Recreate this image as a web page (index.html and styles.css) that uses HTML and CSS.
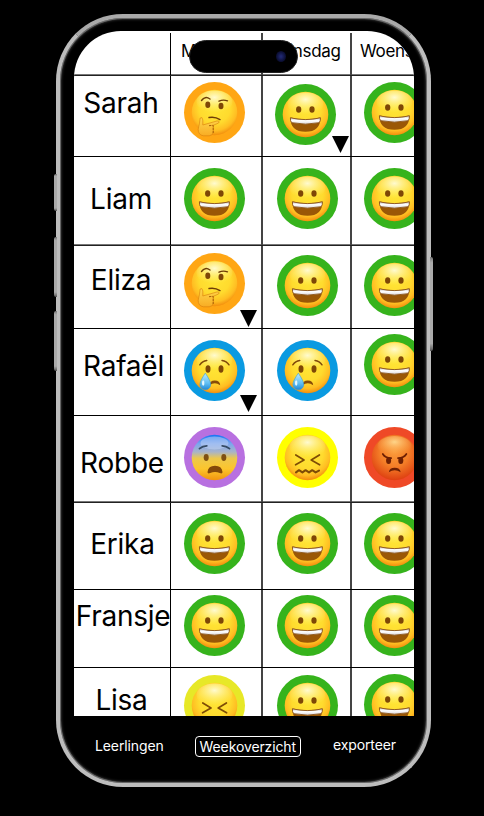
FILE: index.html
```html
<!DOCTYPE html>
<html lang="nl">
<head>
<meta charset="utf-8">
<title>Weekoverzicht</title>
<link rel="stylesheet" href="styles.css">
</head>
<body>
<svg class="defs" width="0" height="0" aria-hidden="true">
  <defs>
    <radialGradient id="skin" cx=".5" cy=".4" r=".62"><stop offset="0" stop-color="#ffe636"/><stop offset=".55" stop-color="#ffdb2e"/><stop offset=".8" stop-color="#ffbd22"/><stop offset="1" stop-color="#f08408"/></radialGradient>
    <radialGradient id="shine" cx=".5" cy=".3" r=".65"><stop offset="0" stop-color="#fffcd8" stop-opacity=".95"/><stop offset="1" stop-color="#fff27a" stop-opacity="0"/></radialGradient>
    <radialGradient id="rage" cx=".5" cy=".38" r=".63"><stop offset="0" stop-color="#fb9a3a"/><stop offset=".5" stop-color="#f47f28"/><stop offset="1" stop-color="#dd3d10"/></radialGradient>
    <radialGradient id="rageshine" cx=".5" cy=".3" r=".65"><stop offset="0" stop-color="#ffe39a" stop-opacity=".85"/><stop offset="1" stop-color="#ffb050" stop-opacity="0"/></radialGradient>
    <linearGradient id="fear" x1="0" y1="0" x2="0" y2="1"><stop offset="0" stop-color="#1573f5"/><stop offset=".2" stop-color="#7ca6ee"/><stop offset=".38" stop-color="#a9b4c8"/><stop offset=".52" stop-color="#ecc84c"/><stop offset=".75" stop-color="#fcc52c"/><stop offset="1" stop-color="#f0930f"/></linearGradient>
    <linearGradient id="tear" x1="0" y1="0" x2="0" y2="1"><stop offset="0" stop-color="#bdeaff"/><stop offset=".6" stop-color="#62bff2"/><stop offset="1" stop-color="#2188d6"/></linearGradient>
    <linearGradient id="teeth" x1="0" y1="0" x2="0" y2="1"><stop offset="0" stop-color="#c9c6c8"/><stop offset=".45" stop-color="#fff"/><stop offset="1" stop-color="#d8d4d8"/></linearGradient>
    <linearGradient id="hand" x1="0" y1="0" x2="0" y2="1"><stop offset="0" stop-color="#ffd84e"/><stop offset="1" stop-color="#f8ac24"/></linearGradient>
    <symbol id="ball" viewBox="0 0 61 61">
      <circle cx="30.5" cy="30.5" r="22.8" fill="url(#skin)"/>
      <ellipse cx="30.5" cy="20" rx="18" ry="11.5" fill="url(#shine)"/>
    </symbol>
    <symbol id="happy" viewBox="0 0 61 61">
      <use href="#ball"/>
      <ellipse cx="23.7" cy="25.5" rx="2.6" ry="3.2" fill="#7e4706"/><ellipse cx="37" cy="25.5" rx="2.6" ry="3.2" fill="#7e4706"/>
      <path d="M15.4 33.5Q30.5 37 45.4 33.5Q45.6 47.8 30.5 47.8Q15.2 47.8 15.4 33.5Z" fill="#9a5706"/>
      <path d="M15.4 33.8Q30.5 37.4 45.4 33.8Q45.6 37.2 44.2 38.7Q30.5 41.6 16.7 38.7Q15.2 37.2 15.4 33.8Z" fill="url(#teeth)" stroke="#8b5215" stroke-width=".9"/>
    </symbol>
    <symbol id="think" viewBox="0 0 61 61">
      <use href="#ball"/>
      <g fill="none" stroke="#6e3d06" stroke-width="1.4" stroke-linecap="round"><path d="M17.5 18.5Q21 13.5 26 17"/><path d="M35 19.2Q39 17.2 43.5 18.8"/><path d="M25 35.5Q31 34.3 36 37.6"/></g>
      <ellipse cx="23.8" cy="22.8" rx="2.5" ry="3.3" fill="#7e4706"/><ellipse cx="37" cy="24" rx="2.5" ry="3.3" fill="#7e4706"/>
      <path d="M16.2 36Q18.4 34.2 18.8 38V43L32.8 39Q36.3 38.7 34.6 41L29.3 43.3V50Q29 53.5 25.2 53.8H19.5Q14 53 14.2 47.2Q15.6 42 16.2 36Z" fill="url(#hand)" stroke="#d97e0a" stroke-width=".6"/>
      <path d="M25 43.7L29.2 43.3V51" fill="none" stroke="#a86008" stroke-width="1" stroke-dasharray="2.4 .9"/>
    </symbol>
    <symbol id="cry" viewBox="0 0 61 61">
      <use href="#ball"/>
      <g fill="none" stroke="#80490a" stroke-width="1.5" stroke-linecap="round"><path d="M15.8 24.8Q18.4 20.8 22.8 20.4"/><path d="M38 20.4Q42.6 21 45 24.8"/></g>
      <ellipse cx="24" cy="29" rx="2.5" ry="3.7" fill="#7e4706"/><ellipse cx="37" cy="29" rx="2.5" ry="3.7" fill="#7e4706"/>
      <path d="M25.4 45.2Q25.6 40.5 30.8 40.5T36.2 45.2Q33.5 43.2 30.8 43.2T25.4 45.2Z" fill="#884c08"/>
      <path d="M21.3 33.2Q26.7 41 26.7 44.4A5.4 5.4 0 0 1 15.9 44.4Q15.9 41 21.3 33.2Z" fill="url(#tear)" stroke="#379fdc" stroke-width=".6"/>
      <ellipse cx="19.2" cy="43" rx="1.2" ry="2.8" fill="#e6f8ff"/>
    </symbol>
    <symbol id="scared" viewBox="0 0 61 61">
      <circle cx="30.5" cy="30.5" r="22.8" fill="url(#fear)"/>
      <ellipse cx="30.5" cy="16" rx="14" ry="6.5" fill="#c5d5f4" opacity=".5"/>
      <g fill="none" stroke="#344a64" stroke-width="1.8" stroke-linecap="round"><path d="M15.5 21.6Q18.5 18.8 22.8 18.8"/><path d="M38.2 18.8Q42.3 18.8 45.5 21.6"/></g>
      <ellipse cx="22.2" cy="30.5" rx="2.5" ry="3.4" fill="#7e5011"/><ellipse cx="39.8" cy="30.5" rx="2.5" ry="3.4" fill="#7e5011"/>
      <path d="M23.5 45Q24.2 38.8 31 38.8T38.5 45Q38.5 47.2 35.8 46Q31 44.2 26.2 46Q23.5 47.2 23.5 45Z" fill="#84490a"/>
    </symbol>
    <symbol id="squirm" viewBox="0 0 61 61">
      <use href="#ball"/>
      <g fill="none" stroke="#7e4c06" stroke-width="1.7" stroke-linecap="round" stroke-linejoin="round"><path d="M18.8 28L27 33L18.6 37.8"/><path d="M42.4 28L34.2 33L42.6 37.8"/><path stroke-width="2.1" d="M19 45.4L22 43.2L25.4 45.4L28.6 43.2L32 45.4L35.2 43.2L38.6 45.4L42 43.6"/></g>
    </symbol>
    <symbol id="angry" viewBox="0 0 61 61">
      <circle cx="30.5" cy="30.5" r="22.8" fill="url(#rage)"/>
      <ellipse cx="30.5" cy="19" rx="17" ry="10" fill="url(#rageshine)"/>
      <g fill="none" stroke="#6e2003" stroke-width="1.7" stroke-linecap="round"><path d="M18.8 27Q21 31 27.2 31.2"/><path d="M42.4 27Q40 31 34 31.2"/></g>
      <ellipse cx="24.6" cy="33.5" rx="2.5" ry="3.6" fill="#6e2003"/><ellipse cx="36.8" cy="33.5" rx="2.5" ry="3.6" fill="#6e2003"/>
      <path d="M24.8 45.2Q25.5 40.8 30.7 40.8T36.7 45.2Q33.6 43.2 30.7 43.2T24.8 45.2Z" fill="#6e2003"/>
    </symbol>
  </defs>
</svg>
<div class="phone">
  <i class="button action"></i><i class="button up"></i><i class="button down"></i><i class="button power"></i>
  <div class="island"><i class="lens"></i></div>
  <main class="screen">
    <div class="row head"><div class="cell"></div><div class="cell"><span>Maandag</span></div><div class="cell"><span>Dinsdag</span></div><div class="cell"><span>Woensdag</span></div></div>
    <div class="row sarah"><div class="cell name"><span>Sarah</span></div>
      <div class="cell"><svg class="mood orange"><use href="#think"/></svg></div>
      <div class="cell"><svg class="mood green"><use href="#happy"/></svg><i class="note"></i></div>
      <div class="cell"><svg class="mood green"><use href="#happy"/></svg></div></div>
    <div class="row liam"><div class="cell name"><span>Liam</span></div>
      <div class="cell"><svg class="mood green"><use href="#happy"/></svg></div>
      <div class="cell"><svg class="mood green"><use href="#happy"/></svg></div>
      <div class="cell"><svg class="mood green"><use href="#happy"/></svg></div></div>
    <div class="row eliza"><div class="cell name"><span>Eliza</span></div>
      <div class="cell"><svg class="mood orange"><use href="#think"/></svg><i class="note"></i></div>
      <div class="cell"><svg class="mood green"><use href="#happy"/></svg></div>
      <div class="cell"><svg class="mood green"><use href="#happy"/></svg></div></div>
    <div class="row rafael"><div class="cell name"><span>Rafaël</span></div>
      <div class="cell"><svg class="mood blue"><use href="#cry"/></svg><i class="note"></i></div>
      <div class="cell"><svg class="mood blue"><use href="#cry"/></svg></div>
      <div class="cell"><svg class="mood green"><use href="#happy"/></svg></div></div>
    <div class="row robbe"><div class="cell name"><span>Robbe</span></div>
      <div class="cell"><svg class="mood purple"><use href="#scared"/></svg></div>
      <div class="cell"><svg class="mood yellow"><use href="#squirm"/></svg></div>
      <div class="cell"><svg class="mood red"><use href="#angry"/></svg></div></div>
    <div class="row erika"><div class="cell name"><span>Erika</span></div>
      <div class="cell"><svg class="mood green"><use href="#happy"/></svg></div>
      <div class="cell"><svg class="mood green"><use href="#happy"/></svg></div>
      <div class="cell"><svg class="mood green"><use href="#happy"/></svg></div></div>
    <div class="row fransje"><div class="cell name"><span>Fransje</span></div>
      <div class="cell"><svg class="mood green"><use href="#happy"/></svg></div>
      <div class="cell"><svg class="mood green"><use href="#happy"/></svg></div>
      <div class="cell"><svg class="mood green"><use href="#happy"/></svg></div></div>
    <div class="row lisa"><div class="cell name"><span>Lisa</span></div>
      <div class="cell"><svg class="mood lime"><use href="#squirm"/></svg></div>
      <div class="cell"><svg class="mood green"><use href="#happy"/></svg></div>
      <div class="cell"><svg class="mood green"><use href="#happy"/></svg></div></div>
  </main>
  <nav class="tabs"><a>Leerlingen</a><a class="active">Weekoverzicht</a><a class="export">exporteer</a></nav>
</div>
</body>
</html>
```
FILE: styles.css
```css
* { box-sizing: border-box; }
body { margin: 0; height: 816px; overflow: hidden; background: #000; font-family: Inter, sans-serif; color: #000; }
.defs { position: absolute; }
.phone { position: relative; width: 375px; height: 773px; margin: 14px 0 0 56px; padding: 13px 13px 0 14px; border: 4px solid #bdbdbd; border-top-color: #aaa; border-radius: 67px; background: #000; box-shadow: inset 0 0 3px 1px #555, inset 0 0 0 1px #888; }
.screen { width: 340px; height: 685px; overflow: hidden; border-radius: 47px 47px 0 0; background: #fff; }
.row { display: grid; grid-template-columns: 97px 92px 89px 89px; border-bottom: 1px solid #000; }
.cell { position: relative; display: flex; align-items: flex-start; border-right: 1px solid #000; padding-left: 13px; }
.cell:nth-child(2), .cell:nth-child(3) { border-right-color: #444; box-shadow: inset -1px 0 #444; }
.cell:nth-child(3) { padding-left: 14px; }
.cell:nth-child(4) { padding-left: 12px; border: 0; }
.name { padding: 0; justify-content: center; font-size: 28px; line-height: 28px; font-weight: 400; letter-spacing: -.25px; }
.mood { display: block; flex: none; width: 61px; height: 61px; border-radius: 50%; }
.note { position: absolute; right: 5px; bottom: 3px; width: 17px; height: 17px; background: #000; clip-path: polygon(0 0, 100% 0, 50% 100%); }
.orange { background: #ffa614; }
.green { background: #36b31c; }
.blue { background: #0a9ae1; }
.purple { background: #b870e0; }
.yellow { background: #ffff00; }
.red { background: #ef4927; }
.lime { background: #e7e827; }

.head { height: 45px; padding-top: 2px; font-size: 17px; line-height: 20px; letter-spacing: -.3px; }
.head, .liam, .robbe { border-bottom-color: #222; box-shadow: inset 0 -1px #777; }
.head .cell { padding-top: 8px; padding-left: 10px; }
.head .cell:nth-child(3) { padding-left: 14px; }
.head .cell:nth-child(4) { padding-left: 8px; }
.sarah { height: 81px; }
.sarah .name { padding-top: 13px; padding-right: 2px; }
.sarah .mood { margin-top: 6px; }
.sarah .cell:nth-child(3) { padding-left: 12px; }
.sarah .cell:nth-child(3) .mood { margin-top: 8px; }
.sarah .note { right: 2px; }
.liam { height: 89px; }
.liam .name { padding-top: 28px; padding-right: 2px; }
.liam .mood { margin-top: 11px; }
.eliza { height: 83px; }
.eliza .name { padding-top: 20px; padding-right: 2px; }
.eliza .mood { margin-top: 9px; }
.eliza .cell:nth-child(2) .mood { margin-top: 7px; }
.eliza .note { bottom: 1px; }
.rafael { height: 87px; }
.rafael .name { padding: 23px 0 0 3px; }
.rafael .mood { margin-top: 11px; }
.rafael .cell:nth-child(4) .mood { margin-top: 5px; }
.robbe { height: 87px; }
.robbe .name { padding-top: 33px; }
.robbe .mood { margin-top: 11px; }
.erika { height: 87px; }
.erika .name { padding-top: 27px; padding-left: 1px; }
.erika .mood { margin-top: 10px; }
.fransje { height: 78px; }
.fransje .name { padding-top: 12px; padding-left: 2px; }
.fransje .mood { margin-top: 5px; }
.lisa { height: 88px; }
.lisa .name { padding-top: 18px; padding-right: 1px; }
.lisa .mood { margin-top: 7px; }
.lisa .cell:nth-child(4) .mood { margin-top: 6px; }

.island { position: absolute; z-index: 2; top: 22px; left: 129px; width: 109px; height: 33px; border-radius: 17px; background: #000; border: 1px solid #222; }
.lens { position: absolute; right: 11px; top: 10px; width: 10px; height: 11px; border-radius: 50%; background: radial-gradient(#20276e 10%, #0c1038 60%, #05050f); }
.tabs { display: flex; align-items: center; height: 40px; padding: 0 0 0 21px; margin-top: 10px; color: #fff; font-size: 14px; line-height: 18px; font-weight: 400; letter-spacing: -.12px; }
.tabs a { white-space: nowrap; }
.tabs .active { margin-left: 31px; padding: 1px 4px 0; border: 1px solid #fff; border-radius: 4px; }
.tabs .export { margin: -3px 0 0 32px; }
.button { position: absolute; left: -6px; width: 3px; border-radius: 2px 0 0 2px; background: linear-gradient(#777, #aaa 6%, #aaa 92%, #555); }
.action { top: 156px; height: 37px; }
.up { top: 219px; height: 60px; }
.down { top: 293px; height: 60px; }
.power { left: auto; right: -6px; top: 239px; height: 94px; border-radius: 0 2px 2px 0; }
```
